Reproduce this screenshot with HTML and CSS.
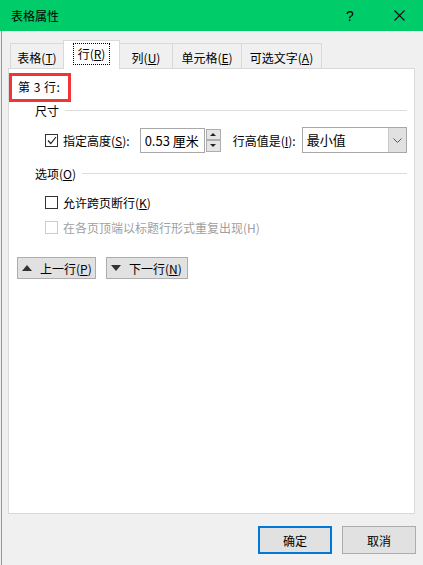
FILE: index.html
```html
<!DOCTYPE html>
<html lang="zh-CN">
<head>
    <meta charset="UTF-8">
    <title>表格属性</title>
    <link rel="stylesheet" href="styles.css">
</head>
<body>
    <div class="window">
        <div class="titlebar">
            <span class="title">表格属性</span>
            <span class="help">?</span>
            <span class="close">
                <svg width="11" height="11" viewBox="0 0 11 11"><path d="M0.5 0.5 L10.5 10.5 M10.5 0.5 L0.5 10.5" stroke="#111" stroke-width="1.1" fill="none"/></svg>
            </span>
        </div>

        <div class="tabs">
            <div class="tab tab-table">表格(<u>T</u>)</div>
            <div class="tab tab-row active"><span class="focus">行(<u>R</u>)</span></div>
            <div class="tab tab-col">列(<u>U</u>)</div>
            <div class="tab tab-cell">单元格(<u>E</u>)</div>
            <div class="tab tab-alt">可选文字(<u>A</u>)</div>
        </div>

        <div class="panel">
            <div class="row-label">第 3 行:</div>

            <div class="group-head head-size">
                <span>尺寸</span>
                <div class="rule"></div>
            </div>
            <div class="size-row">
                <span class="check checked">
                    <svg width="10" height="9" viewBox="0 0 10 9"><path d="M1 4.5 L3.8 7.5 L9 1" stroke="#222" stroke-width="1.2" fill="none"/></svg>
                </span>
                <span class="lbl">指定高度(<u>S</u>):</span>
                <div class="spin">
                    <div class="spin-input">0.53 厘米</div>
                    <div class="spin-btns">
                        <div class="spin-btn"><span class="tri-up"></span></div>
                        <div class="spin-btn"><span class="tri-down"></span></div>
                    </div>
                </div>
                <span class="lbl lbl-mode">行高值是(<u>I</u>):</span>
                <div class="select">
                    <div class="select-val">最小值</div>
                    <div class="select-arrow">
                        <svg width="9" height="5" viewBox="0 0 9 5"><path d="M0.5 0.5 L4.5 4.5 L8.5 0.5" stroke="#555" stroke-width="1" fill="none"/></svg>
                    </div>
                </div>
            </div>

            <div class="group-head head-opt">
                <span>选项(<u>O</u>)</span>
                <div class="rule"></div>
            </div>
            <div class="opt-row">
                <span class="check"></span>
                <span class="lbl">允许跨页断行(<u>K</u>)</span>
            </div>
            <div class="opt-row disabled">
                <span class="check"></span>
                <span class="lbl">在各页顶端以标题行形式重复出现(H)</span>
            </div>

            <div class="nav-row">
                <button class="btn nav-btn prev"><span class="tri-up big"></span>上一行(<u>P</u>)</button>
                <button class="btn nav-btn next"><span class="tri-down big"></span>下一行(<u>N</u>)</button>
            </div>
        </div>

        <div class="footer">
            <button class="btn ok">确定</button>
            <button class="btn cancel">取消</button>
        </div>
    </div>
</body>
</html>
```

FILE: styles.css
```css
body {
    margin: 0;
    padding: 0 0 0 1px;
    background-color: #f0f0f0;
    font-family: "Noto Sans CJK SC", "Liberation Sans", sans-serif;
    font-size: 12px;
    color: #000;
}
.window {
    height: 565px;
    border-left: 1px solid #3cc98a;
    background-color: #f0f0f0;
    display: flex;
    flex-direction: column;
}
u {
    text-decoration: underline;
    text-underline-offset: 1px;
}

/* title bar */
.titlebar {
    height: 31px;
    background-color: #00cc6a;
    display: flex;
    align-items: center;
    margin-left: -2px;
    padding-left: 11px;
}
.title {
    flex: 1;
    font-size: 12px;
}
.help {
    width: 14px;
    margin-right: 34px;
    font-size: 14px;
    font-family: "Liberation Sans", sans-serif;
}
.close {
    width: 11px;
    margin-right: 18px;
    display: flex;
}

/* tabs */
.tabs {
    display: flex;
    margin-top: 11px;
    margin-left: 8px;
    height: 26px;
    align-items: flex-end;
    position: relative;
    z-index: 1;
}
.tab {
    height: 25px;
    border: 1px solid #d9d9d9;
    border-bottom: none;
    border-right: none;
    display: flex;
    align-items: center;
    justify-content: center;
    box-sizing: border-box;
    padding-top: 2px;
}
.tab-table { width: 53px; }
.tab-row { width: 57px; }
.tab-col { width: 52px; }
.tab-cell { width: 69px; }
.tab-alt { width: 81px; border-right: 1px solid #d9d9d9; }
.tab.active {
    height: 29px;
    background-color: #fff;
    border-right: 1px solid #d9d9d9;
    margin-bottom: -1px;
    padding-top: 0;
    padding-bottom: 2px;
}
.tab.active + .tab {
    border-left: none;
}
.focus {
    border: 1px dotted #000;
    padding: 3px 4px;
    line-height: 14px;
}

/* panel */
.panel {
    margin-left: 6px;
    width: 407px;
    height: 446px;
    box-sizing: border-box;
    border: 1px solid #d9d9d9;
    background-color: #fff;
}
.row-label {
    margin: 4px 0 0 0;
    width: 62px;
    height: 29px;
    box-sizing: border-box;
    border: 3px solid #ef3535;
    padding-left: 6px;
    line-height: 22px;
    letter-spacing: 0.5px;
}
.group-head {
    display: flex;
    align-items: center;
    margin-left: 26px;
    margin-right: 7px;
}
.rule {
    flex: 1;
    height: 1px;
    background-color: #dcdcdc;
    margin-left: 6px;
}
.head-size {
    margin-top: 0;
    height: 16px;
}
.head-opt {
    margin-top: 12px;
    height: 16px;
}

.check {
    width: 11px;
    height: 11px;
    border: 1px solid #333;
    box-sizing: content-box;
    display: inline-flex;
    align-items: center;
    justify-content: center;
    margin-right: 5px;
    background-color: #fff;
}
.size-row {
    display: flex;
    align-items: center;
    margin-top: 9px;
    margin-left: 36px;
    height: 26px;
}
.spin {
    display: flex;
    margin-left: 10px;
    height: 25px;
}
.spin-input {
    width: 65px;
    box-sizing: border-box;
    border: 1px solid #a8a8a8;
    padding-left: 4px;
    line-height: 23px;
    font-size: 13px;
}
.spin-btns {
    display: flex;
    flex-direction: column;
    justify-content: space-between;
    width: 15px;
    margin-left: 1px;
    padding: 1px 0;
    box-sizing: border-box;
}
.spin-btn {
    height: 10px;
    border: 1px solid #adadad;
    background-color: #e5e5e5;
    display: flex;
    align-items: center;
    justify-content: center;
}
.tri-up, .tri-down {
    width: 0;
    height: 0;
    border-left: 3px solid transparent;
    border-right: 3px solid transparent;
}
.tri-up { border-bottom: 3px solid #222; }
.tri-down { border-top: 3px solid #222; }
.tri-up.big, .tri-down.big {
    border-left-width: 5px;
    border-right-width: 5px;
    margin: 0 8px 0 4px;
}
.tri-up.big { border-bottom: 6px solid #333; }
.tri-down.big { border-top: 6px solid #333; }

.lbl-mode {
    margin-left: 12px;
}
.select {
    display: flex;
    margin-left: 6px;
    width: 105px;
    height: 26px;
    box-sizing: border-box;
    border: 1px solid #a8a8a8;
}
.select-val {
    flex: 1;
    padding-left: 4px;
    line-height: 24px;
    font-size: 13px;
}
.select-arrow {
    width: 17px;
    background-color: #e1e1e1;
    border-left: 1px solid #c8c8c8;
    display: flex;
    align-items: center;
    justify-content: center;
}

.opt-row {
    display: flex;
    align-items: center;
    margin-left: 36px;
    height: 16px;
    margin-top: 13px;
}
.opt-row + .opt-row {
    margin-top: 9px;
}
.opt-row.disabled {
    color: #a0a0a0;
}
.opt-row.disabled .check {
    border-color: #cccccc;
}

.nav-row {
    display: flex;
    margin-left: 8px;
    margin-top: 22px;
    gap: 10px;
}
.btn {
    font-family: "Noto Sans CJK SC", "Liberation Sans", sans-serif;
    font-size: 12px;
    color: #000;
    background-color: #e1e1e1;
    border: 1px solid #adadad;
    border-radius: 0;
    padding: 0;
    margin: 0;
}
.nav-btn {
    height: 22px;
    display: flex;
    align-items: center;
}
.prev { width: 79px; }
.next { width: 82px; }

/* footer */
.footer {
    display: flex;
    justify-content: flex-end;
    gap: 10px;
    margin-top: 12px;
    margin-right: 7px;
}
.footer .btn {
    width: 74px;
    height: 28px;
}
.ok {
    border: 2px solid #0078d7;
}
.cancel {
    width: 74px;
}
```
